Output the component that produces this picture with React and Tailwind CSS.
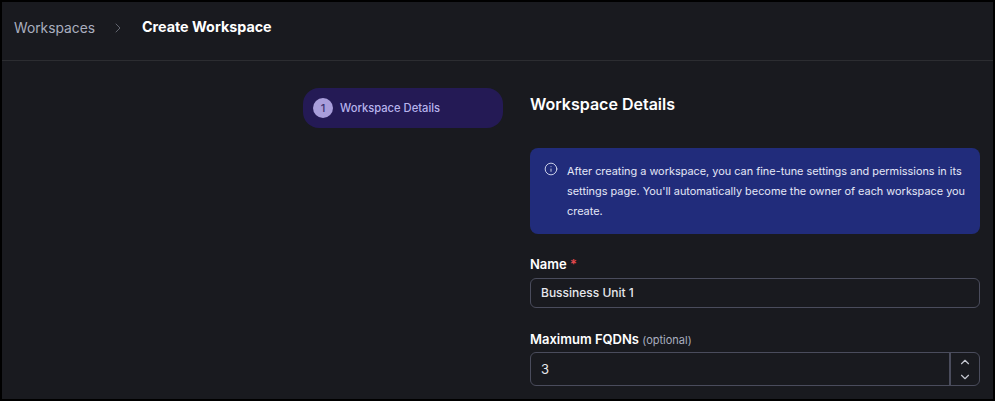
import React from "react";
import { ChevronRight, ChevronUp, ChevronDown, Info } from "lucide-react";

export default function App() {
  return (
    <div className="h-[401px] w-[995px] overflow-hidden border-2 border-black bg-[#191a1f] font-['Inter',sans-serif] text-white">
      <header className="flex h-[59px] items-start border-b border-[#2c2d31] pl-3 pt-4">
        <span className="text-[13.8px] leading-5 text-[#a9aebf]">Workspaces</span>
        <ChevronRight className="ml-[15px] mt-[2px] h-4 w-4 text-[#62656f]" strokeWidth={1.5} />
        <span className="ml-[16px] -mt-[1px] text-[14.3px] font-bold leading-5">Create Workspace</span>
      </header>
      <div className="flex pl-[301px] pt-[27px]">
        <div className="flex h-10 w-[200px] items-center gap-[7px] rounded-2xl bg-[#241a55] pl-[10px]">
          <span className="flex h-5 w-5 items-center justify-center rounded-full bg-[#a99edb] text-[11px] font-medium text-[#3a3170]">1</span>
          <span className="text-[11.2px] font-medium text-[#b7b3ec]">Workspace Details</span>
        </div>
        <main className="ml-[27px] w-[450px]">
          <h1 className="mt-[6px] text-base font-semibold leading-5">Workspace Details</h1>
          <div className="mt-[34px] flex h-[86px] gap-[9px] rounded-lg bg-[#212c7b] pl-[14px] pr-2 pt-[10px]">
            <Info className="mt-[4px] h-[14px] w-[14px] shrink-0 text-[#dfe3f5]" strokeWidth={1.5} />
            <p className="pt-[3px] text-[10.9px] leading-5 text-[#e4e7f7]">
              After creating a workspace, you can fine-tune settings and permissions in its settings page. You'll automatically become the owner of each workspace you create.
            </p>
          </div>
          <label className="mt-[20px] block text-[13px] font-semibold leading-5">
            Name <span className="text-[#e5484d]">*</span>
          </label>
          <div className="mt-[4px] flex h-[30px] items-center rounded-md border border-[#4a4c5c] pl-[10px] text-xs font-medium text-[#e6e7ec]">
            Bussiness Unit 1
          </div>
          <label className="mt-[21px] block text-[13px] font-semibold leading-5">
            Maximum FQDNs <span className="text-[11px] font-normal text-[#a9aebf]">(optional)</span>
          </label>
          <div className="mt-[2px] flex h-[34px] rounded-md border border-[#4a4c5c]">
            <span className="flex flex-1 items-center pl-[10px] pt-[1px] text-[13px] text-[#e6e7ec]">3</span>
            <div className="flex w-[30px] flex-col items-center justify-center gap-[1px] border-l-2 border-[#4a4c5c] text-[#c5c7d0]">
              <ChevronUp className="h-[14px] w-[14px]" strokeWidth={2} />
              <ChevronDown className="h-[14px] w-[14px]" strokeWidth={2} />
            </div>
          </div>
        </main>
      </div>
    </div>
  );
}
